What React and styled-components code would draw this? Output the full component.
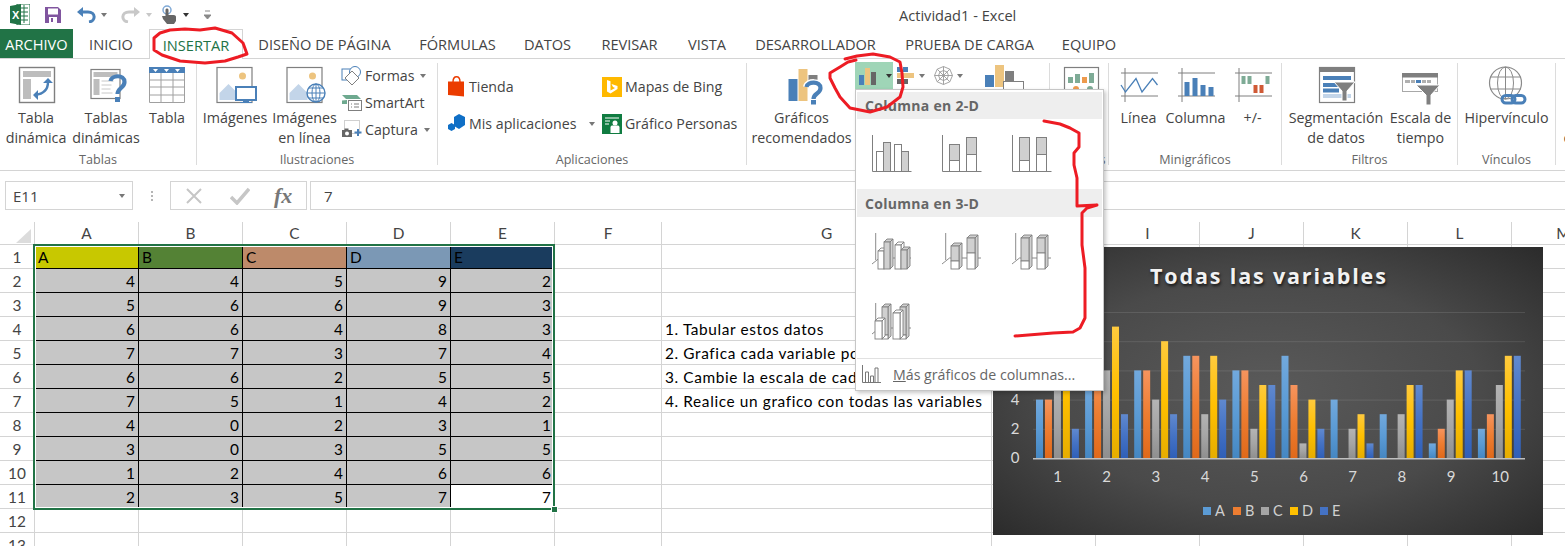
import styled, { createGlobalStyle } from "styled-components";

const UI = `"Open Sans", "Noto Sans", sans-serif`;
const CALC = `Lato, "Open Sans", sans-serif`;
const GRAY = "#7f7f7f";
const BLUE = "#4a80b8";
const SAND = "#edc47f";
const PALE = "#c3d5e9";
const GREEN = "#217346";
const INK = "#ed1c24";

const GlobalStyle = createGlobalStyle`
  html, body { margin: 0; padding: 0; background: #fff; }
  * { box-sizing: border-box; }
`;

const Page = styled.div`
  position: relative;
  width: 1565px;
  height: 546px;
  overflow: hidden;
  background: #fff;
  font-family: ${UI};
  color: #444;
`;

/* ---- title bar ---- */
const TitleBar = styled.div`
  display: flex;
  align-items: center;
  height: 29px;
`;
const Qat = styled.div`
  display: flex;
  align-items: center;
  width: 899px;
  padding-left: 10px;
`;
const QatIcon = styled.svg`
  flex: none;
  margin-left: ${(p) => p.$ml || 0}px;
`;
const DocTitle = styled.div`
  font-size: 14.6px;
  color: #444;
  white-space: nowrap;
`;

/* ---- tabs ---- */
const TabsBar = styled.div`
  display: flex;
  height: 30px;
  border-bottom: 1px solid #d4d4d4;
`;
const Tab = styled.div`
  display: flex;
  align-items: center;
  justify-content: center;
  flex: none;
  width: ${(p) => p.$w}px;
  height: ${(p) => (p.$active ? 30 : 29)}px;
  font-size: 14.6px;
  white-space: nowrap;
  color: ${(p) => (p.$active ? GREEN : p.$file ? "#fff" : "#444")};
  background: ${(p) => (p.$file ? GREEN : "#fff")};
  border: ${(p) => (p.$active ? "1px solid #d4d4d4" : "none")};
  border-bottom: none;
`;

/* ---- ribbon ---- */
const Ribbon = styled.div`
  display: flex;
  height: 112px;
  padding: 4px 0 6px;
  border-bottom: 1px solid #d4d4d4;
`;
const Group = styled.div`
  display: flex;
  flex-direction: column;
  flex: none;
  width: ${(p) => p.$w}px;
  height: 102px;
  border-right: ${(p) => (p.$last ? "none" : "1px solid #dcdcdc")};
  overflow: ${(p) => (p.$last ? "hidden" : "visible")};
`;
const GroupBody = styled.div`
  display: flex;
  flex: 1;
  padding-left: ${(p) => p.$pl || 0}px;
`;
const GroupLabel = styled.div`
  height: 20px;
  margin-bottom: -5px;
  line-height: 20px;
  text-align: center;
  font-size: 12.6px;
  color: #666;
`;
const BigButton = styled.div`
  display: flex;
  flex-direction: column;
  align-items: center;
  flex: none;
  width: ${(p) => p.$w}px;
  padding-top: 2px;
`;
const IconSlot = styled.div`
  height: 43px;
  width: 40px;
  flex: none;
`;
const BigLabel = styled.div`
  font-size: 14.3px;
  line-height: 20px;
  text-align: center;
  white-space: nowrap;
  color: #444;
`;
const SmallCol = styled.div`
  display: flex;
  flex-direction: column;
  flex: none;
  width: ${(p) => p.$w || 100}px;
  margin-left: ${(p) => p.$ml || 0}px;
  margin-top: -1px;
  padding-top: ${(p) => p.$pt || 0}px;
`;
const SmallRow = styled.div`
  display: flex;
  align-items: center;
  gap: ${(p) => p.$gap || 3}px;
  height: ${(p) => p.$h || 27}px;
  font-size: 14.2px;
  white-space: nowrap;
  color: #444;
`;
const Caret = styled.span`
  display: inline-block;
  flex: none;
  width: 0;
  height: 0;
  margin-left: ${(p) => p.$ml || 3}px;
  border-left: 3.5px solid transparent;
  border-right: 3.5px solid transparent;
  border-top: 4px solid ${(p) => p.$color || "#777"};
`;
const ChartTool = styled.div`
  display: flex;
  align-items: center;
  flex: none;
  width: ${(p) => p.$w}px;
  height: 27px;
  margin-top: -1px;
  margin-left: ${(p) => p.$ml || 0}px;
  padding-left: ${(p) => p.$pl || 0}px;
  background: ${(p) => (p.$hot ? "#9fd5b7" : "transparent")};
`;

/* ---- formula bar ---- */
const FormulaBar = styled.div`
  display: flex;
  height: 29px;
  margin-top: 10px;
  padding-left: 5px;
`;
const NameBox = styled.div`
  display: flex;
  align-items: center;
  justify-content: space-between;
  width: 128px;
  padding: 0 7px;
  border: 1px solid #d4d4d4;
  font-size: 15px;
  color: #444;
`;
const Dots = styled.div`
  display: flex;
  flex-direction: column;
  align-items: center;
  justify-content: center;
  gap: 2px;
  width: 37px;
  & > i {
    width: 2px;
    height: 2px;
    background: #b5b5b5;
  }
`;
const FxBox = styled.div`
  display: flex;
  align-items: center;
  width: 137px;
  border: 1px solid #d4d4d4;
  padding-left: 14px;
`;
const CheckMark = styled.svg`
  margin-left: 27px;
`;
const FxMark = styled.span`
  margin-left: 24px;
  font-family: "Liberation Serif", serif;
  font-style: italic;
  font-weight: 700;
  font-size: 22px;
  line-height: 1;
  color: #777;
`;
const ValueBox = styled.div`
  display: flex;
  align-items: center;
  flex: 1;
  margin-left: 3px;
  padding-left: 13px;
  border: 1px solid #d4d4d4;
  border-right: none;
  font-size: 15px;
  color: #444;
`;

/* ---- sheet ---- */
const Sheet = styled.div`
  position: relative;
  margin-top: 12px;
  font-family: ${CALC};
`;
const SheetRow = styled.div`
  display: flex;
  height: ${(p) => p.$h || 24}px;
`;
const RowHead = styled.div`
  display: flex;
  align-items: center;
  justify-content: center;
  flex: none;
  width: 35px;
  border-right: 1px solid #d4d4d4;
  border-bottom: 1px solid #d4d4d4;
  font-size: 15.4px;
  color: #444;
`;
const Corner = styled(RowHead)`
  position: relative;
  &::after {
    content: "";
    position: absolute;
    right: 3px;
    bottom: 1px;
    border-left: 15px solid transparent;
    border-bottom: 14px solid #dcdcdc;
  }
`;
const ColHead = styled.div`
  display: flex;
  align-items: center;
  justify-content: center;
  flex: none;
  width: ${(p) => p.$w}px;
  border-right: 1px solid #d4d4d4;
  border-bottom: 1px solid #d4d4d4;
  font-size: 15.4px;
  color: #444;
`;
const Cell = styled.div`
  display: flex;
  align-items: center;
  flex: none;
  justify-content: ${(p) => (p.$num ? "flex-end" : "flex-start")};
  width: ${(p) => p.$w}px;
  padding: 0 3px;
  white-space: nowrap;
  font-size: 15.4px;
  color: #000;
  letter-spacing: ${(p) => (p.$note ? "0.62px" : "0")};
  background: ${(p) => p.$bg || "transparent"};
  border-right: 1px solid ${(p) => (p.$bg ? "#000" : "#d4d4d4")};
  border-bottom: 1px solid ${(p) => (p.$bg ? "#000" : "#d4d4d4")};
`;
const Selection = styled.div`
  position: absolute;
  left: 33px;
  top: 22px;
  width: 522px;
  height: 266px;
  border: 2px solid ${GREEN};
  box-shadow: inset 0 0 0 1px #fff;
`;
const Handle = styled.div`
  position: absolute;
  right: -5px;
  bottom: -5px;
  width: 7px;
  height: 7px;
  background: ${GREEN};
  border: 1px solid #fff;
`;

/* ---- floating chart ---- */
const ChartPanel = styled.div`
  position: absolute;
  left: 993px;
  top: 247px;
  width: 550px;
  height: 288px;
  background: radial-gradient(ellipse at 50% 50%, #5a5a5a 0%, #4a4a4a 55%, #2b2b2b 100%);
`;
const ChartTitle = styled.div`
  position: relative;
  padding-top: 15px;
  padding-left: 157px;
  font-family: ${UI};
  font-size: 21.5px;
  font-weight: 700;
  letter-spacing: 1.85px;
  line-height: 28px;
  color: #f2f2f2;
  text-shadow: 1px 2px 3px rgba(0, 0, 0, 0.7);
  white-space: nowrap;
`;
const ChartArt = styled.svg`
  position: absolute;
  left: 0;
  top: 0;
  font-family: ${CALC};
`;

/* ---- dropdown ---- */
const ChartMenu = styled.div`
  position: absolute;
  left: 855px;
  top: 89px;
  width: 249px;
  height: 302px;
  padding: 2px 1px 0;
  background: #fff;
  border: 1px solid #c6c6c6;
  box-shadow: 2px 2px 4px rgba(0, 0, 0, 0.22);
`;
const MenuHeader = styled.div`
  height: ${(p) => p.$h}px;
  line-height: ${(p) => p.$h + 1}px;
  padding-left: 8px;
  background: #eee;
  font-size: 14px;
  font-weight: 700;
  color: #666;
  letter-spacing: 0.3px;
`;
const Gallery = styled.div`
  display: grid;
  grid-template-columns: repeat(3, 70px);
  row-gap: 33px;
  padding: 16px 0 ${(p) => p.$pb}px 15px;
`;
const MenuFooter = styled.div`
  display: flex;
  align-items: center;
  gap: 12px;
  height: 31px;
  padding-left: 5px;
  border-top: 1px solid #e1e1e1;
  font-size: 14.2px;
  color: #666;
  & u {
    text-decoration-thickness: 1px;
  }
`;
const InkLayer = styled.svg`
  position: absolute;
  left: 0;
  top: 0;
  pointer-events: none;
`;

/* ---- icons ---- */
const Svg = ({ children, w = 40, h = 40 }) => (
  <svg width={w} height={h} viewBox={`0 0 ${w} ${h}`} style={{ overflow: "visible", display: "block" }}>
    {children}
  </svg>
);

const PivotIcon = () => (
  <Svg>
    <rect x="3.5" y="2.5" width="35" height="35" fill="#fff" stroke={GRAY} strokeWidth="1.4" />
    <rect x="7" y="6" width="28" height="6" fill="#bdbdbd" />
    <rect x="7" y="14" width="8" height="20" fill="#bdbdbd" />
    <path d="M32 17c0 8-5 12-13 13" fill="none" stroke={BLUE} strokeWidth="2.4" />
    <path d="M27 18l5-5 5 5zM22 25l-5 5 5 5z" fill={BLUE} />
  </Svg>
);
const PivotHelpIcon = () => (
  <Svg>
    <g transform="translate(3.5 0)">
      <rect x="1.5" y="4.5" width="29" height="29" fill="#fff" stroke={GRAY} strokeWidth="1.2" />
      <rect x="4" y="7" width="24" height="5" fill="#bdbdbd" />
      <rect x="4" y="14" width="6" height="16" fill="#bdbdbd" />
      <path d="M12 16h12M12 20h10M12 24h9M12 28h11" stroke="#c8c8c8" />
      <path d="M21 16c1-6 14-7 14 1 0 6-7 6-7 12" fill="none" stroke={BLUE} strokeWidth="4.2" />
      <rect x="25.5" y="32" width="5" height="5" fill={BLUE} />
    </g>
  </Svg>
);
const TableIcon = () => (
  <Svg>
    <rect x="2" y="2" width="36" height="6" fill={BLUE} />
    <path d="M6 4h5l-2.500 3zM17 4h5l-2.500 3zM28 4h5l-2.500 3z" fill="#fff" />
    <path d="M2.500 8v29.500h35V8M2.500 15h35M2.500 22h35M2.500 30h35M14 8v29M26 8v29" fill="none" stroke="#a0a0a0" />
  </Svg>
);
const PictureFrame = () => (
  <>
    <rect x="2" y="2.500" width="35" height="35" fill="#fff" stroke={GRAY} strokeWidth="1.2" />
    <circle cx="27.500" cy="11" r="3.500" fill={SAND} />
    <path d="M4.500 35v-7l9-9 9 9v7z" fill={PALE} />
  </>
);
const PictureIcon = () => (
  <Svg>
    <PictureFrame />
    <rect x="21" y="22" width="20" height="13" fill="#fff" stroke={BLUE} strokeWidth="2" />
    <path d="M28 35h6v2h3v1H25v-1h3z" fill={BLUE} />
  </Svg>
);
const OnlinePictureIcon = () => (
  <Svg>
    <PictureFrame />
    <circle cx="31" cy="28" r="9" fill="#fff" stroke={BLUE} strokeWidth="1.4" />
    <path d="M22 28h18M23.500 23h15M23.500 33h15M31 19v18" stroke={BLUE} fill="none" />
    <ellipse cx="31" cy="28" rx="4" ry="9" fill="none" stroke={BLUE} />
  </Svg>
);
const ShapesIcon = () => (
  <Svg w={21} h={21}>
    <rect x="1" y="4" width="12" height="11" fill="#fff" stroke={BLUE} />
    <circle cx="14" cy="7" r="5.500" fill="#fff" stroke={BLUE} />
    <path d="M11 6l7 7-7 7-7-7z" fill="#fff" stroke={GRAY} />
  </Svg>
);
const SmartArtIcon = () => (
  <Svg w={21} h={21}>
    <path d="M1 3h15l4 4H5z" fill="#6ea98f" />
    <path d="M1 12h5v-4l-5 .5z" fill="#6ea98f" />
    <rect x="7.500" y="8.500" width="13" height="10" fill="#fff" stroke={GRAY} />
    <path d="M10 12h1M13 12h5M10 15h1M13 15h5" stroke={GRAY} />
  </Svg>
);
const CaptureIcon = () => (
  <Svg w={21} h={21}>
    <rect x="3.500" y="1.500" width="15" height="13" fill="none" stroke="#a0a0a0" strokeDasharray="1 1" />
    <rect x="1" y="11" width="10" height="7" fill="#666" />
    <rect x="3.500" y="9.500" width="4" height="2" fill="#666" />
    <circle cx="6" cy="14.500" r="2" fill="#fff" />
    <path d="M17 10v7M13.500 13.500h7" stroke={BLUE} strokeWidth="2" />
  </Svg>
);
const StoreIcon = () => (
  <Svg w={17} h={21}>
    <path d="M5 6c0-7 7-7 7 0" fill="none" stroke="#eb3c00" strokeWidth="1.400" />
    <path d="M0 5.500h16v15l-16-1.500z" fill="#eb3c00" />
  </Svg>
);
const AppsIcon = () => (
  <Svg w={17} h={19}>
    <path d="M11 0l6 3v8l-6 4-5-3V3z" fill="#0f6fc6" />
    <path d="M3.500 9l3.500 2v4l-3.500 2L0 15v-4z" fill="#0f6fc6" />
  </Svg>
);
const BingIcon = () => (
  <Svg w={20} h={20}>
    <rect width="20" height="20" fill="#ffb900" />
    <path d="M5 3l3.500 1.200v9.300l4.500-2.400-2-1L9.500 7 15.500 9v3l-7 4.500L5 14.500z" fill="#fff" />
  </Svg>
);
const PeopleGraphIcon = () => (
  <Svg w={20} h={20}>
    <rect width="20" height="20" fill="#107c41" />
    <path d="M3 4h14M3 7h5M3 10h4" stroke="#fff" />
    <circle cx="13" cy="9" r="2.500" fill="#fff" />
    <path d="M8.500 19v-5.500c0-1.500 1-2 2-2h5c1 0 2 .5 2 2V19z" fill="#fff" />
  </Svg>
);
const RecommendedIcon = () => (
  <Svg>
    <g transform="translate(6.500 0)">
      <rect x="0" y="14" width="9" height="22" fill={BLUE} />
      <rect x="10" y="4" width="9" height="32" fill={SAND} />
      <rect x="20" y="10" width="9" height="8" fill="#7f7f7f" />
      <path d="M18 22c1-6 14-6 14 1 0 6-7 5-7 11" fill="none" stroke="#fff" strokeWidth="7" />
      <path d="M18 22c1-6 14-6 14 1 0 6-7 5-7 11" fill="none" stroke={BLUE} strokeWidth="4.200" />
      <rect x="22.500" y="35" width="5" height="4.500" fill={BLUE} />
    </g>
  </Svg>
);
const ColumnToolIcon = () => (
  <Svg w={22} h={18}>
    <rect x="0" y="8" width="5" height="10" fill={BLUE} />
    <rect x="6" y="1" width="5" height="17" fill={SAND} />
    <rect x="12" y="5" width="5" height="13" fill="#666" />
  </Svg>
);
const HierarchyIcon = () => (
  <Svg w={18} h={18}>
    <rect x="0" y="0" width="11" height="5" fill={BLUE} />
    <rect x="0" y="6" width="17" height="5" fill={SAND} />
    <rect x="0" y="12" width="11" height="5" fill="#666" />
    <rect x="5" y="0" width="1" height="17" fill="#fff" />
  </Svg>
);
const RadarIcon = () => (
  <Svg w={19} h={19}>
    <path
      d="M9.500 .5l6.300 2.700 2.700 6.300-2.700 6.300-6.300 2.700-6.300-2.700L.5 9.500l2.700-6.300zM9.500 4.500l3.500 1.500 1.500 3.500-1.500 3.500-3.500 1.500-3.500-1.500-1.500-3.500 1.500-3.500zM9.500 .5v18M.5 9.500h18M3.200 3.200l12.600 12.600M15.800 3.200L3.200 15.800"
      fill="none"
      stroke="#9a9a9a"
      strokeWidth=".9"
    />
  </Svg>
);
const PivotChartIcon = () => (
  <Svg w={40} h={22}>
    <rect x="0" y="10" width="9" height="12" fill={BLUE} />
    <rect x="10" y="0" width="9" height="22" fill={SAND} />
    <rect x="20" y="6" width="9" height="16" fill="#7f7f7f" />
    <rect x="18.500" y="16.500" width="20" height="8" fill="#fff" stroke={GRAY} />
  </Svg>
);
const PowerViewIcon = () => (
  <Svg>
    <rect x="5.500" y="2.500" width="34" height="34" fill="#fff" stroke={GRAY} strokeWidth="1.200" />
    <rect x="9" y="12" width="5" height="6" fill="#7eab96" />
    <rect x="16" y="9" width="5" height="9" fill="#7eab96" />
    <rect x="23" y="12" width="5" height="6" fill="#ed9a4d" />
    <rect x="30" y="8" width="5" height="10" fill="#7eab96" />
    <circle cx="17" cy="24" r="3" fill="#ed9a4d" />
    <circle cx="31" cy="24" r="3" fill="#7eab96" />
  </Svg>
);
const SparkAxes = ({ top = 8 }) => (
  <path d={`M6 3v34M2 ${top}h37M2 31h37`} fill="none" stroke={GRAY} />
);
const SparkLineIcon = () => (
  <Svg>
    <SparkAxes />
    <path d="M2 20l4.500 7L17 13.500 23 27l10.500-13.500L38.500 20" fill="none" stroke={BLUE} strokeWidth="1.300" />
  </Svg>
);
const SparkColumnIcon = () => (
  <Svg>
    <SparkAxes />
    {[[8.5, 17], [16.5, 13], [24.5, 20], [32.5, 22]].map(([x, y]) => (
      <rect key={x} x={x} y={y} width="5" height={31 - y} fill={BLUE} />
    ))}
  </Svg>
);
const SparkWinLossIcon = () => (
  <Svg>
    <SparkAxes />
    {[8.5, 14.5, 32.5].map((x) => (
      <rect key={x} x={x} y="11" width="4" height="8" fill="#7eab96" />
    ))}
    {[20.5, 26.5].map((x) => (
      <rect key={x} x={x} y="20" width="4" height="8" fill="#d05a36" />
    ))}
  </Svg>
);
const SlicerIcon = () => (
  <Svg>
    <rect x="3.500" y="2.500" width="35" height="35" fill="#fff" stroke={GRAY} strokeWidth="1.200" />
    <rect x="3" y="2" width="36" height="5" fill={GRAY} />
    <rect x="7" y="11" width="28" height="4" fill={BLUE} />
    <rect x="7" y="18" width="18" height="4" fill={BLUE} />
    <rect x="7" y="23.500" width="16" height="4" fill={BLUE} />
    <rect x="7" y="29" width="28" height="4" fill={PALE} />
    <path d="M18 17h21l-8 9v10h-5V26z" fill={GRAY} stroke="#fff" />
  </Svg>
);
const TimelineIcon = () => (
  <Svg>
    <rect x="1.500" y="8.500" width="35" height="18" fill="#fff" stroke="#a8a8a8" />
    <rect x="1" y="8" width="36" height="4.500" fill={GRAY} />
    <path d="M4 16.500h5M10 16.500h4" stroke="#b0b0b0" strokeWidth="3" />
    <path d="M15 16.500h5" stroke={BLUE} strokeWidth="3" />
    <path d="M21 16.500h4M26 16.500h4" stroke="#b0b0b0" strokeWidth="3" />
    <path d="M15 20h24l-9 10v10h-5V30z" fill={GRAY} stroke="#fff" />
  </Svg>
);
const LinkIcon = () => (
  <Svg>
    <circle cx="18.500" cy="18" r="16" fill="#fff" stroke="#8a8a8a" strokeWidth="1.200" />
    <ellipse cx="18.500" cy="18" rx="8" ry="16" fill="none" stroke="#8a8a8a" />
    <path d="M3 12h31M3 24h31M18.500 2v32" stroke="#8a8a8a" />
    <rect x="15" y="30.500" width="13" height="7.500" rx="3.700" fill="none" stroke={BLUE} strokeWidth="3" />
    <rect x="25" y="30.500" width="13" height="7.500" rx="3.700" fill="none" stroke={BLUE} strokeWidth="3" />
  </Svg>
);

/* gallery thumbnails */
const Stroke = "#7f7f7f";
const Bar2D = ({ x, top, split, w = 10 }) => (
  <>
    <rect x={x + 0.5} y={top + 0.5} width={w} height={split - top} fill="#d0d0d0" stroke={Stroke} />
    <rect x={x + 0.5} y={split + 0.5} width={w} height={36 - split} fill="#fff" stroke={Stroke} />
  </>
);
const Axes2D = () => <path d="M.5 0v36.500h39" fill="none" stroke={Stroke} />;
const Clustered2D = () => (
  <Svg w={40} h={37}>
    <Bar2D x={4} top={16} split={16} w={7} />
    <Bar2D x={11} top={7} split={36} w={7} />
    <Bar2D x={22} top={9} split={9} w={7} />
    <Bar2D x={29} top={16} split={36} w={7} />
    <Axes2D />
  </Svg>
);
const Stacked2D = ({ a, b }) => (
  <Svg w={40} h={37}>
    <Bar2D x={7} top={a} split={25} />
    <Bar2D x={24} top={b} split={19} />
    <Axes2D />
  </Svg>
);
const Cuboid = ({ x, top, split, w = 7, d = 3 }) => (
  <>
    <path
      d={`M${x} ${top}l${d} -${d}h${w}l-${d} ${d}zM${x + w} ${top}l${d} -${d}V${36 - d}l-${d} ${d}z`}
      fill={split > top ? "#d0d0d0" : "#fff"}
      stroke={Stroke}
      strokeWidth=".9"
    />
    <rect x={x} y={top} width={w} height={split - top} fill="#d0d0d0" stroke={Stroke} strokeWidth=".9" />
    <rect x={x} y={split} width={w} height={36 - split} fill="#fff" stroke={Stroke} strokeWidth=".9" />
  </>
);
const Floor3D = () => (
  <path d="M3.700 0v27M0 31l7.500-6H39" fill="none" stroke={Stroke} strokeWidth=".9" />
);
const Thumb3D = ({ bars }) => (
  <Svg w={40} h={37}>
    <Floor3D />
    {bars.map((b) => (
      <Cuboid key={`${b.x}-${b.top}`} {...b} />
    ))}
  </Svg>
);
const MoreIcon = () => (
  <Svg w={19} h={18}>
    <path d="M.5 0v17.500H19" fill="none" stroke="#777" />
    <path d="M3.500 17V7h3v10M8.500 17v-6h3v6M13 17V3h3v14" fill="none" stroke="#777" />
  </Svg>
);

/* ---- data ---- */
const tabs = [
  ["INICIO", 76],
  ["INSERTAR", 94, true],
  ["DISEÑO DE PÁGINA", 163],
  ["FÓRMULAS", 103],
  ["DATOS", 77],
  ["REVISAR", 87],
  ["VISTA", 68],
  ["DESARROLLADOR", 149],
  ["PRUEBA DE CARGA", 159],
  ["EQUIPO", 80],
];
const columns = [
  ["A", 104], ["B", 104], ["C", 104], ["D", 104], ["E", 104],
  ["F", 107], ["G", 330], ["H", 104], ["I", 104], ["J", 104],
  ["K", 104], ["L", 104], ["M", 104],
];
const heads = [
  ["A", "#c8c800"],
  ["B", "#548235"],
  ["C", "#bd8a6a"],
  ["D", "#7b98b5"],
  ["E", "#1a3c5e"],
];
const values = [
  [4, 4, 5, 9, 2],
  [5, 6, 6, 9, 3],
  [6, 6, 4, 8, 3],
  [7, 7, 3, 7, 4],
  [6, 6, 2, 5, 5],
  [7, 5, 1, 4, 2],
  [4, 0, 2, 3, 1],
  [3, 0, 3, 5, 5],
  [1, 2, 4, 6, 6],
  [2, 3, 5, 7, 7],
];
const notes = {
  4: "1. Tabular estos datos",
  5: "2. Grafica cada variable por",
  6: "3. Cambie la escala de cada",
  7: "4. Realice un grafico con todas las variables",
};
const series = [
  ["#72a9dd", "#5b9bd5", "#4587c2"],
  ["#f6945e", "#ed7d31", "#e0691a"],
  ["#b4b4b4", "#a5a5a5", "#8f8f8f"],
  ["#ffca3e", "#ffc000", "#e6ad00"],
  ["#6089cf", "#4472c4", "#2f5fb8"],
];
const legendX = [210, 240, 268, 297, 327];

const Chart = () => {
  const y0 = 211;
  const unit = 14.6;
  return (
    <ChartArt width="550" height="288">
      <defs>
        {series.map((c, i) => (
          <linearGradient key={i} id={`bar${i}`} x1="0" y1="0" x2="0" y2="1">
            <stop offset="0" stopColor={c[0]} />
            <stop offset=".5" stopColor={c[1]} />
            <stop offset="1" stopColor={c[2]} />
          </linearGradient>
        ))}
      </defs>
      {[2, 4, 6, 8, 10].map((v) => (
        <line key={v} x1="40" x2="532" y1={y0 - v * unit + 0.5} y2={y0 - v * unit + 0.5} stroke="rgba(255,255,255,.11)" />
      ))}
      {/* 6, 8 and 10 sit behind the open menu */}
      {[0, 2, 4].map((v) => (
        <text key={v} x="22" y={y0 - v * unit + 5} textAnchor="middle" fontSize="15" fill="#d9d9d9">{v}</text>
      ))}
      {values.map((row, c) =>
        row.map((v, s) => (
          <rect
            key={`${c}-${s}`}
            x={43 + c * 49.1 + s * 8.97}
            y={y0 - v * unit}
            width="7"
            height={v * unit}
            fill={`url(#bar${s})`}
          />
        ))
      )}
      <rect x="40" y={y0} width="492" height="1.500" fill="#bfbfbf" />
      {values.map((_, c) => (
        <text key={c} x={64.500 + c * 49.2} y="235" textAnchor="middle" fontSize="15" fill="#d9d9d9">{c + 1}</text>
      ))}
      {heads.map(([n], i) => (
        <g key={n}>
          <rect x={legendX[i]} y="260" width="8" height="8" fill={series[i][1]} />
          <text x={legendX[i] + 12} y="269" fontSize="14.500" fill="#d0d0d0">{n}</text>
        </g>
      ))}
    </ChartArt>
  );
};

const Ink = () => (
  <InkLayer width="1565" height="546">
    <g fill="none" stroke={INK} strokeWidth="3" strokeLinejoin="round" strokeLinecap="round">
      <path d="M160 33L170 30 185 29 200 30 215 28 232 33 243 43 247 54 238 57 225 61 205 63 180 61 162 55 154 50 154 38 160 33" />
      <path d="M845 59L857 56 873 54 890 57 900 62 902 73 903 87 900 97 887 107 870 112 850 108 840 97 835 88 830 78 830 73 840 67 848 62 856 60" />
      <path d="M1044 121L1060 124 1070 128 1079 133 1079 147 1074 153 1074 165 1077 178 1077 206 1097 205 1087 208 1082 213 1082 245 1085 268 1085 318 1080 328 1073 332 1053 333 1015 336" />
    </g>
  </InkLayer>
);

export default function App() {
  return (
    <Page>
      <GlobalStyle />
      <TitleBar>
        <Qat>
          <QatIcon width="20" height="21" viewBox="0 0 20 21">
            <path d="M7 0h13v21H7z" fill="#fff" stroke={GREEN} />
            <path d="M11 4h7M11 8h7M11 12h7M11 16h7M14 1v18" stroke={GREEN} />
            <path d="M0 2l11-2v21L0 19z" fill={GREEN} />
            <text x="2" y="15" fontFamily="Liberation Sans" fontWeight="700" fontSize="11" fill="#fff">X</text>
          </QatIcon>
          <QatIcon $ml={15} width="16" height="16" viewBox="0 0 16 16">
            <path d="M0 0h13l3 3v13H0z" fill="#80559f" />
            <rect x="3" y="1.500" width="10" height="6" fill="#fff" />
            <rect x="4" y="10" width="8" height="6" fill="#fff" />
            <rect x="6" y="11" width="2" height="4" fill="#80559f" />
          </QatIcon>
          <QatIcon $ml={16} width="19" height="16" viewBox="0 0 19 16">
            <path d="M4 5h7c8 0 8 9 1 10" fill="none" stroke="#4a80b8" strokeWidth="3" />
            <path d="M6 0v10L0 5z" fill="#4a80b8" />
          </QatIcon>
          <Caret $ml={5} />
          <QatIcon $ml={14} width="19" height="16" viewBox="0 0 19 16">
            <path d="M15 5H8C0 5 0 14 7 15" fill="none" stroke="#c8c8c8" strokeWidth="3" />
            <path d="M13 0v10l6-5z" fill="#c8c8c8" />
          </QatIcon>
          <Caret $ml={6} $color="#c8c8c8" />
          <QatIcon $ml={9} width="16" height="20" viewBox="0 0 16 20">
            <circle cx="6" cy="5" r="4" fill="none" stroke="#7fa9d6" strokeWidth="1.500" />
            <path d="M4.500 5c0-2 3-2 3 0v5h5c2 0 2.500 1 2.500 2v4l-2 3H6l-4-5-1-3h3.500z" fill="#666" />
          </QatIcon>
          <Caret $ml={6} $color="#333" />
          <QatIcon $ml={15} width="7" height="10" viewBox="0 0 7 10">
            <path d="M1 1h5M0 5h7l-3.500 4z" stroke="#888" fill="#888" />
          </QatIcon>
        </Qat>
        <DocTitle>Actividad1 - Excel</DocTitle>
      </TitleBar>

      <TabsBar>
        <Tab $w={73} $file>ARCHIVO</Tab>
        {tabs.map(([label, w, active]) => (
          <Tab key={label} $w={w} $active={active}>{label}</Tab>
        ))}
      </TabsBar>

      <Ribbon>
        <Group $w={197}>
          <GroupBody>
            <BigButton $w={72}><IconSlot><PivotIcon /></IconSlot><BigLabel>Tabla<br />dinámica</BigLabel></BigButton>
            <BigButton $w={68}><IconSlot><PivotHelpIcon /></IconSlot><BigLabel>Tablas<br />dinámicas</BigLabel></BigButton>
            <BigButton $w={54}><IconSlot><TableIcon /></IconSlot><BigLabel>Tabla</BigLabel></BigButton>
          </GroupBody>
          <GroupLabel>Tablas</GroupLabel>
        </Group>
        <Group $w={241}>
          <GroupBody $pl={3}>
            <BigButton $w={70}><IconSlot><PictureIcon /></IconSlot><BigLabel>Imágenes</BigLabel></BigButton>
            <BigButton $w={69}><IconSlot><OnlinePictureIcon /></IconSlot><BigLabel>Imágenes<br />en línea</BigLabel></BigButton>
            <SmallCol $w={95} $ml={2}>
              <SmallRow><ShapesIcon />Formas<Caret /></SmallRow>
              <SmallRow><SmartArtIcon />SmartArt</SmallRow>
              <SmallRow><CaptureIcon />Captura<Caret /></SmallRow>
            </SmallCol>
          </GroupBody>
          <GroupLabel>Ilustraciones</GroupLabel>
        </Group>
        <Group $w={309}>
          <GroupBody $pl={10}>
            <SmallCol $w={154} $pt={6}>
              <SmallRow $h={37} $gap={4}><StoreIcon />Tienda</SmallRow>
              <SmallRow $h={37} $gap={4}><AppsIcon />Mis aplicaciones<Caret $ml={8} /></SmallRow>
            </SmallCol>
            <SmallCol $w={140} $pt={6}>
              <SmallRow $h={37}><BingIcon />Mapas de Bing</SmallRow>
              <SmallRow $h={37}><PeopleGraphIcon />Gráfico Personas</SmallRow>
            </SmallCol>
          </GroupBody>
          <GroupLabel>Aplicaciones</GroupLabel>
        </Group>
        <Group $w={303}>
          <GroupBody $pl={1}>
            <BigButton $w={107}><IconSlot><RecommendedIcon /></IconSlot><BigLabel>Gráficos<br />recomendados</BigLabel></BigButton>
            <ChartTool $w={38} $pl={4} $hot><ColumnToolIcon /><Caret $ml={5} $color="#333" /></ChartTool>
            <ChartTool $w={37} $pl={4}><HierarchyIcon /><Caret $ml={4} /></ChartTool>
            <ChartTool $w={36} $pl={4}><RadarIcon /><Caret $ml={4} /></ChartTool>
            <ChartTool $w={40} $ml={19}><PivotChartIcon /></ChartTool>
          </GroupBody>
          <GroupLabel>Gráficos</GroupLabel>
        </Group>
        <Group $w={59}>
          <GroupBody>
            <BigButton $w={58}><IconSlot><PowerViewIcon /></IconSlot><BigLabel>Power<br />View</BigLabel></BigButton>
          </GroupBody>
          <GroupLabel>Informes</GroupLabel>
        </Group>
        <Group $w={173}>
          <GroupBody $pl={1}>
            <BigButton $w={57}><IconSlot><SparkLineIcon /></IconSlot><BigLabel>Línea</BigLabel></BigButton>
            <BigButton $w={57}><IconSlot><SparkColumnIcon /></IconSlot><BigLabel>Columna</BigLabel></BigButton>
            <BigButton $w={57}><IconSlot><SparkWinLossIcon /></IconSlot><BigLabel>+/-</BigLabel></BigButton>
          </GroupBody>
          <GroupLabel>Minigráficos</GroupLabel>
        </Group>
        <Group $w={176}>
          <GroupBody $pl={4}>
            <BigButton $w={100}><IconSlot><SlicerIcon /></IconSlot><BigLabel>Segmentación<br />de datos</BigLabel></BigButton>
            <BigButton $w={69}><IconSlot><TimelineIcon /></IconSlot><BigLabel>Escala de<br />tiempo</BigLabel></BigButton>
          </GroupBody>
          <GroupLabel>Filtros</GroupLabel>
        </Group>
        <Group $w={98}>
          <GroupBody>
            <BigButton $w={97}><IconSlot><LinkIcon /></IconSlot><BigLabel>Hipervínculo</BigLabel></BigButton>
          </GroupBody>
          <GroupLabel>Vínculos</GroupLabel>
        </Group>
        <Group $w={9} $last>
          <GroupBody $pl={6}>
            <SmallCol $w={10} $pt={66}><BigLabel>c</BigLabel></SmallCol>
          </GroupBody>
        </Group>
      </Ribbon>

      <FormulaBar>
        <NameBox>E11<Caret /></NameBox>
        <Dots><i /><i /><i /></Dots>
        <FxBox>
          <svg width="18" height="18" viewBox="0 0 18 18"><path d="M2 2l14 14M16 2L2 16" stroke="#c6c6c6" strokeWidth="2" /></svg>
          <CheckMark width="20" height="18" viewBox="0 0 20 18"><path d="M1 10l6 6L19 2" fill="none" stroke="#c6c6c6" strokeWidth="3.500" /></CheckMark>
          <FxMark>fx</FxMark>
        </FxBox>
        <ValueBox>7</ValueBox>
      </FormulaBar>

      <Sheet>
        <SheetRow $h={23}>
          <Corner />
          {columns.map(([n, w]) => <ColHead key={n} $w={w}>{n}</ColHead>)}
        </SheetRow>
        {Array.from({ length: 13 }, (_, i) => i + 1).map((r) => (
          <SheetRow key={r}>
            <RowHead>{r}</RowHead>
            {columns.map(([n, w], c) => {
              if (c < 5 && r === 1) return <Cell key={n} $w={w} $bg={heads[c][1]}>{heads[c][0]}</Cell>;
              if (c < 5 && r <= 11) {
                const blank = r === 11 && c === 4;
                return <Cell key={n} $w={w} $num $bg={blank ? "#fff" : "#c6c6c6"}>{values[r - 2][c]}</Cell>;
              }
              return <Cell key={n} $w={w} $note={c === 6}>{c === 6 ? notes[r] : null}</Cell>;
            })}
          </SheetRow>
        ))}
        <Selection><Handle /></Selection>
      </Sheet>

      <ChartPanel>
        <Chart />
        <ChartTitle>Todas las variables</ChartTitle>
      </ChartPanel>

      <ChartMenu>
        <MenuHeader $h={27}>Columna en 2-D</MenuHeader>
        <Gallery $pb={17}>
          <Clustered2D />
          <Stacked2D a={9} b={2} />
          <Stacked2D a={2} b={2} />
        </Gallery>
        <MenuHeader $h={28}>Columna en 3-D</MenuHeader>
        <Gallery $pb={18}>
          <Thumb3D bars={[{ x: 6, top: 18, split: 18, w: 6 }, { x: 12, top: 9, split: 36, w: 6 }, { x: 23, top: 12, split: 12, w: 6 }, { x: 29, top: 17, split: 36, w: 6 }]} />
          <Thumb3D bars={[{ x: 9, top: 13, split: 28, w: 8 }, { x: 25, top: 5, split: 20, w: 8 }]} />
          <Thumb3D bars={[{ x: 9, top: 5, split: 28, w: 8 }, { x: 25, top: 5, split: 20, w: 8 }]} />
          <Thumb3D bars={[{ x: 10, top: 4, split: 32, w: 6 }, { x: 28, top: 4, split: 32, w: 6 }, { x: 3, top: 18, split: 18, w: 7 }, { x: 21, top: 10, split: 10, w: 7 }]} />
        </Gallery>
        <MenuFooter><MoreIcon /><span><u>M</u>ás gráficos de columnas...</span></MenuFooter>
      </ChartMenu>

      <Ink />
    </Page>
  );
}
